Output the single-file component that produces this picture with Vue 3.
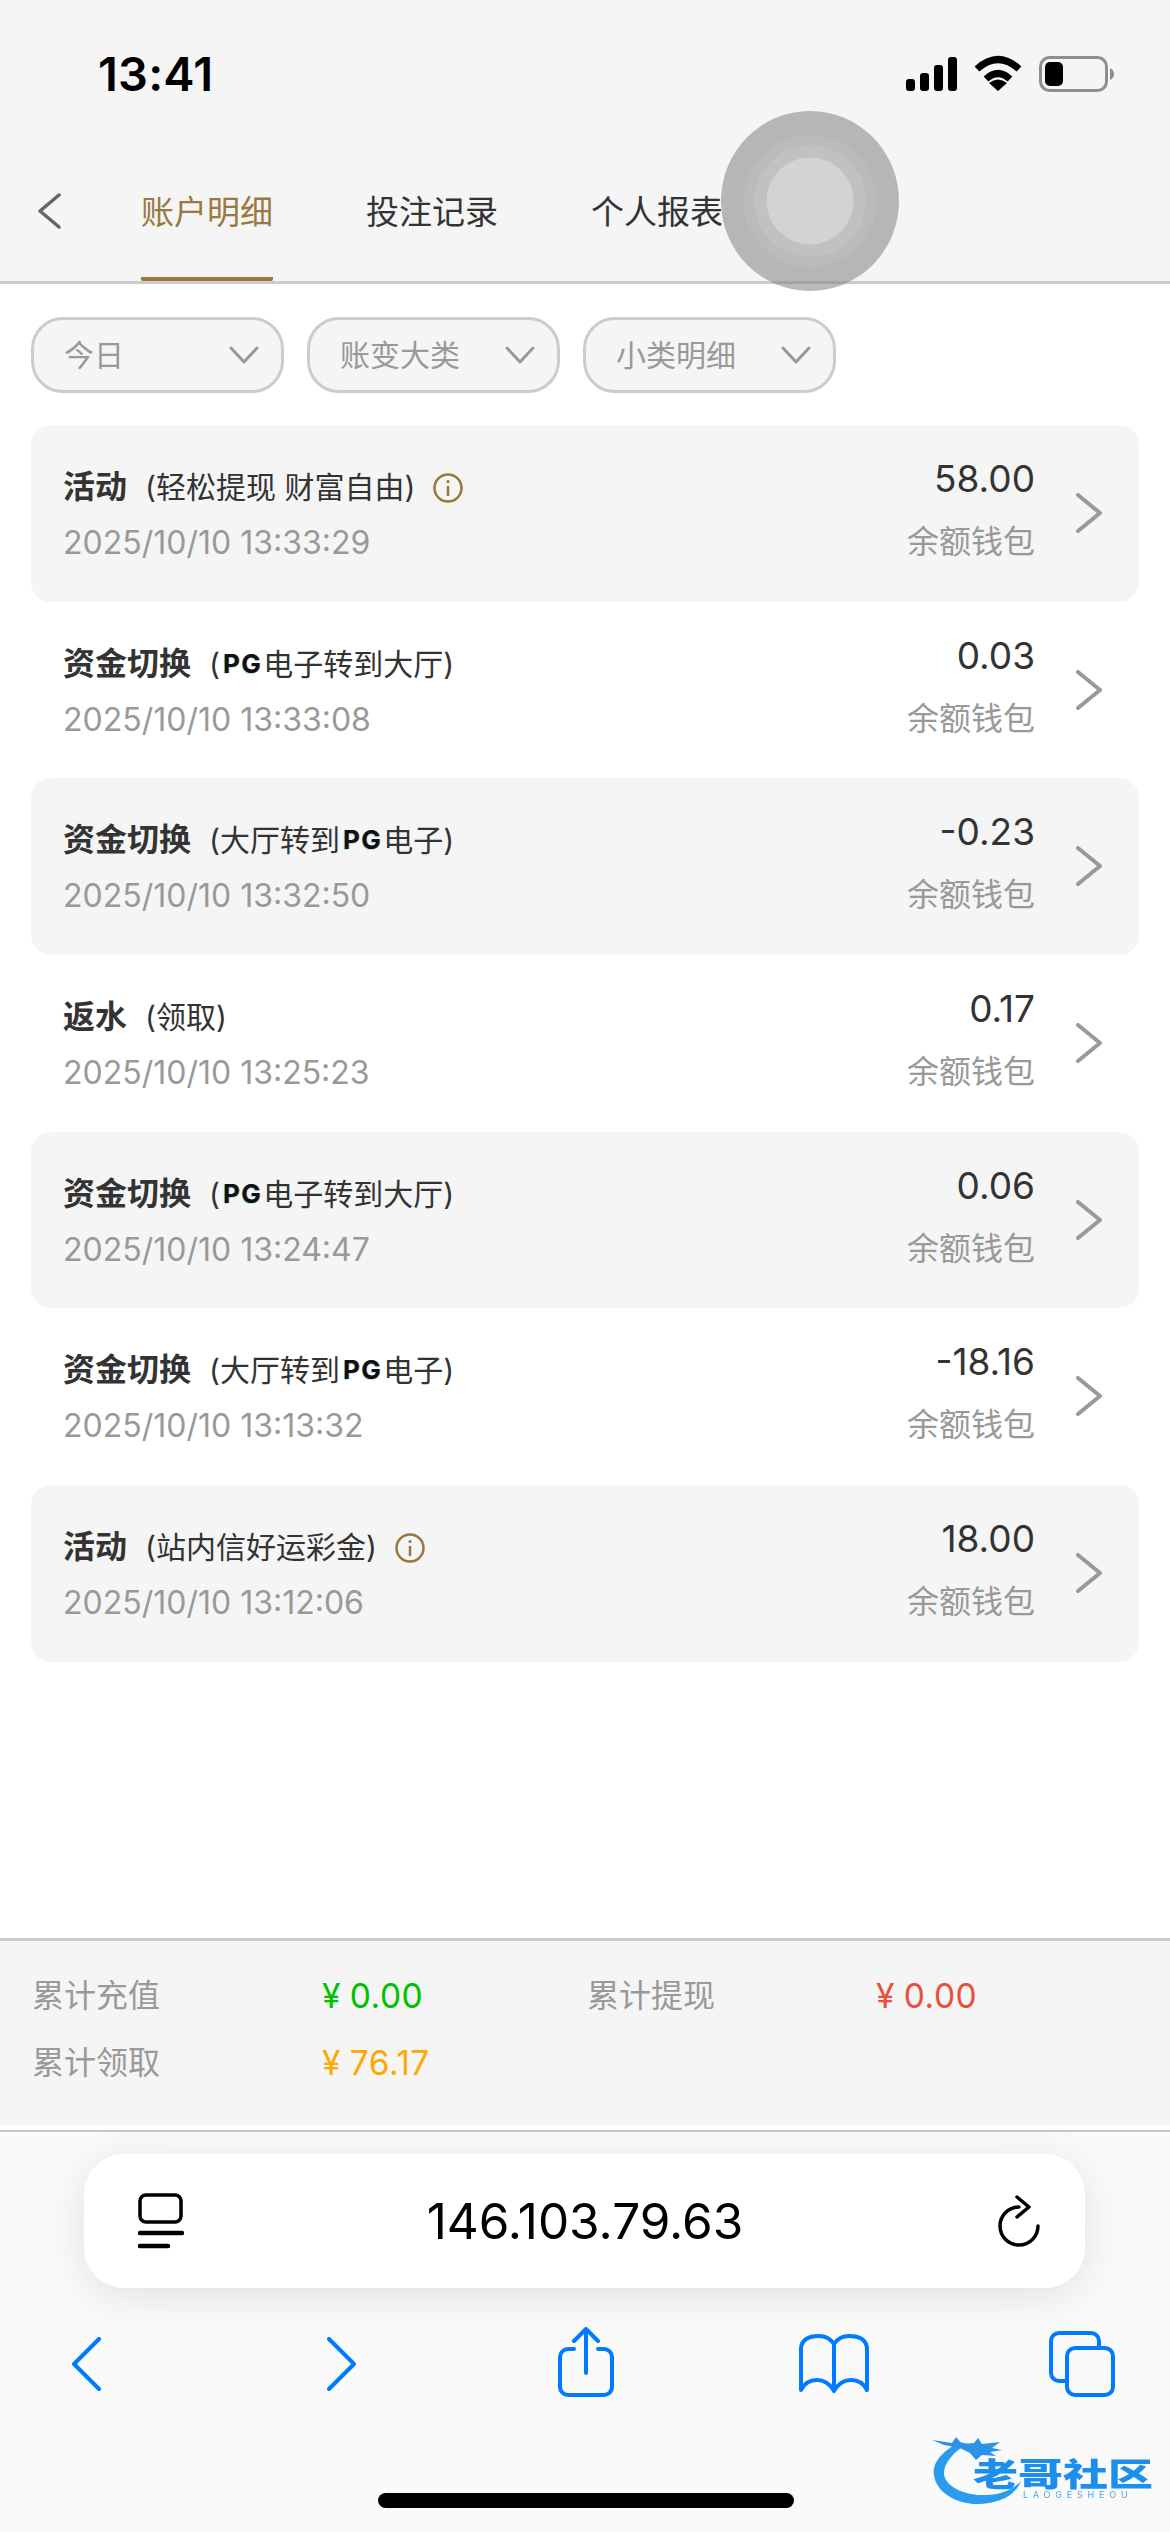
<script setup>
const rows = [
  { id: 1, title: '活动', before: '(轻松提现 财富自由)', pg: false, after: '', info: true, time: '2025/10/10 13:33:29', amount: '58.00' },
  { id: 2, title: '资金切换', before: '(', pg: true, after: '电子转到大厅)', info: false, time: '2025/10/10 13:33:08', amount: '0.03' },
  { id: 3, title: '资金切换', before: '(大厅转到', pg: true, after: '电子)', info: false, time: '2025/10/10 13:32:50', amount: '-0.23' },
  { id: 4, title: '返水', before: '(领取)', pg: false, after: '', info: false, time: '2025/10/10 13:25:23', amount: '0.17' },
  { id: 5, title: '资金切换', before: '(', pg: true, after: '电子转到大厅)', info: false, time: '2025/10/10 13:24:47', amount: '0.06' },
  { id: 6, title: '资金切换', before: '(大厅转到', pg: true, after: '电子)', info: false, time: '2025/10/10 13:13:32', amount: '-18.16' },
  { id: 7, title: '活动', before: '(站内信好运彩金)', pg: false, after: '', info: true, time: '2025/10/10 13:12:06', amount: '18.00' }
]
const filters = ['今日', '账变大类', '小类明细']
const tabs = ['账户明细', '投注记录', '个人报表']
</script>

<template>
  <div class="page">
    <header class="head">
      <div class="status">
        <span class="clock">13:41</span>
        <div class="status-icons">
          <svg class="sig" width="52" height="34" viewBox="0 0 52 34" fill="#000">
            <rect x="0" y="22" width="9" height="12" rx="3" />
            <rect x="14" y="16" width="9" height="18" rx="3" />
            <rect x="28" y="8" width="9" height="26" rx="3" />
            <rect x="42" y="0" width="9" height="34" rx="3" />
          </svg>
          <svg class="wifi" width="48" height="36" viewBox="0 0 48 36" fill="none" stroke="#000">
            <path d="M3 14Q24 -5 45 14" stroke-width="7" />
            <path d="M12 24Q24 13 36 24" stroke-width="7" />
            <path d="M24 36L15 28Q24 21 33 28Z" fill="#000" stroke="none" />
          </svg>
          <svg class="batt" width="76" height="36" viewBox="0 0 76 36">
            <rect x="1.5" y="1.5" width="66" height="33" rx="9" fill="none" stroke="#8e8e8e" stroke-width="3" />
            <rect x="6" y="6" width="18" height="24" rx="5" fill="#000" />
            <path d="M71 12q4 2 4 6t-4 6z" fill="#8e8e8e" />
          </svg>
        </div>
      </div>
      <nav class="nav">
        <svg class="back" width="24" height="36" viewBox="0 0 24 36" fill="none" stroke="#666" stroke-width="3.5" stroke-linecap="round" stroke-linejoin="round">
          <path d="M22 2L3 18L22 34" />
        </svg>
        <a v-for="(t, i) in tabs" :key="t" class="tab" :class="{ on: i === 0 }">{{ t }}</a>
      </nav>
    </header>

    <main class="main">
      <div class="filters">
        <div v-for="f in filters" :key="f" class="pill">
          <span>{{ f }}</span>
          <svg width="30" height="18" viewBox="0 0 30 18" fill="none" stroke="#999" stroke-width="3" stroke-linecap="round" stroke-linejoin="round">
            <path d="M2 2L15 16L28 2" />
          </svg>
        </div>
      </div>

      <ul class="list">
        <li v-for="(r, i) in rows" :key="r.id" class="row" :class="{ alt: i % 2 === 0 }">
          <div class="left">
            <div class="line">
              <b class="title">{{ r.title }}</b>
              <span class="sub">{{ r.before }}<span v-if="r.pg" class="pg">PG</span>{{ r.after }}</span>
              <svg v-if="r.info" class="info" width="30" height="30" viewBox="0 0 30 30" fill="none" stroke="#99783f" stroke-width="2.5">
                <circle cx="15" cy="15" r="13.5" />
                <path d="M15 13V23" />
                <circle cx="15" cy="8.5" r="1.6" fill="#99783f" stroke="none" />
              </svg>
            </div>
            <div class="time">{{ r.time }}</div>
          </div>
          <div class="right">
            <div class="amount">{{ r.amount }}</div>
            <div class="wallet">余额钱包</div>
          </div>
          <svg class="go" width="26" height="40" viewBox="0 0 26 40" fill="none" stroke="#999" stroke-width="4" stroke-linecap="round" stroke-linejoin="round">
            <path d="M2 2L24 20L2 38" />
          </svg>
        </li>
      </ul>
    </main>

    <section class="stats">
      <span class="k">累计充值</span><span class="v green">¥ 0.00</span>
      <span class="k">累计提现</span><span class="v red">¥ 0.00</span>
      <span class="k">累计领取</span><span class="v orange">¥ 76.17</span>
    </section>

    <footer class="safari">
      <div class="addr">
        <svg class="tabs-ic" width="46" height="56" viewBox="0 0 46 56" fill="none" stroke="#000" stroke-width="3.5" stroke-linecap="round">
          <rect x="2" y="2" width="41" height="27" rx="6" />
          <path d="M2 40H44" stroke-width="4.5" />
          <path d="M2 53H30" stroke-width="4.5" />
        </svg>
        <span class="url">146.103.79.63</span>
        <svg class="reload" width="44" height="52" viewBox="0 0 44 52" fill="none" stroke="#000" stroke-width="3.5" stroke-linecap="round" stroke-linejoin="round">
          <path d="M21 12A19 19 0 1 0 40 31" />
          <path d="M19 2L31 12L19 22" />
        </svg>
      </div>
      <div class="tools">
        <svg class="t1" width="29" height="54" viewBox="0 0 29 54" fill="none" stroke="#007aff" stroke-width="4" stroke-linecap="round" stroke-linejoin="round">
          <path d="M27 2L2 27L27 52" />
        </svg>
        <svg class="t2" width="29" height="54" viewBox="0 0 29 54" fill="none" stroke="#007aff" stroke-width="4" stroke-linecap="round" stroke-linejoin="round">
          <path d="M2 2L27 27L2 52" />
        </svg>
        <svg class="t3" width="56" height="70" viewBox="0 0 56 70" fill="none" stroke="#007aff" stroke-width="4" stroke-linecap="round" stroke-linejoin="round">
          <path d="M16 22H10a8 8 0 0 0-8 8V60a8 8 0 0 0 8 8H46a8 8 0 0 0 8-8V30a8 8 0 0 0-8-8H40" />
          <path d="M28 46V3" />
          <path d="M16 14L28 2L40 14" />
        </svg>
        <svg class="t4" width="70" height="59" viewBox="0 0 70 59" fill="none" stroke="#007aff" stroke-width="4" stroke-linejoin="round">
          <path d="M35 10C31 4 25 2 20 2C10 2 3 5 2 14V56C6 48 12 46 18 46C26 46 31 50 35 57C39 50 44 46 52 46C58 46 64 48 68 56V14C67 5 60 2 50 2C45 2 39 4 35 10Z" />
          <path d="M35 10V57" />
        </svg>
        <svg class="t5" width="66" height="66" viewBox="0 0 66 66" fill="none" stroke="#007aff" stroke-width="4" stroke-linejoin="round">
          <path d="M17 50H10a8 8 0 0 1-8-8V10a8 8 0 0 1 8-8H42a8 8 0 0 1 8 8V15" />
          <rect x="18" y="17" width="46" height="47" rx="8" />
        </svg>
      </div>
      <div class="home"></div>
    </footer>

    <div class="assist">
      <i class="ring r1"></i>
      <i class="ring r2"></i>
      <i class="ring r3"></i>
    </div>

    <div class="logo">
      <svg class="dragon" width="100" height="75" viewBox="0 0 100 75">
        <path d="M30 11C12 20 2 32 4 44C6 62 28 74 50 73C70 72 86 64 91 50C84 58 70 65 52 64C32 64 14 54 14 42C14 32 24 20 38 13Z" fill="#2a9cf0" />
        <path d="M2 9L22 12L26 6L32 13L44 12L48 7L52 13L70 11L62 17L72 19L60 21L66 25L52 24L46 29L40 22L30 17L14 14Z" fill="#2a92ea" />
      </svg>
      <span class="logo-cn">老哥社区</span>
      <span class="logo-en">LAOGESHEOU</span>
    </div>
  </div>
</template>

<style>
html, body { margin: 0; padding: 0; background: #fff; }
</style>

<style scoped>
* { box-sizing: border-box; }
.page {
  position: relative;
  width: 1170px;
  height: 2532px;
  overflow: hidden;
  display: flex;
  flex-direction: column;
  background: #fff;
  font-family: Inter, "Noto Sans CJK SC", sans-serif;
  color: #333;
}
.head {
  height: 284px;
  background: #f5f5f5;
  border-bottom: 3px solid #ccc;
  flex: none;
}
.status {
  height: 150px;
  display: flex;
  align-items: flex-start;
  justify-content: space-between;
  padding: 0 55px 0 98px;
}
.clock {
  margin-top: 48px;
  font-size: 47px;
  line-height: 52px;
  font-weight: 600;
  color: #000;
  letter-spacing: .2px;
}
.status-icons { display: flex; align-items: flex-start; margin-top: 55px; }
.sig { margin-top: 2px; }
.wifi { margin-left: 16px; }
.batt { margin-left: 17px; margin-top: 1px; }
.nav {
  height: 131px;
  display: flex;
  align-items: flex-start;
  padding-left: 37px;
  position: relative;
}
.back { margin-top: 43px; margin-right: 80px; }
.tab {
  width: 132px;
  height: 131px;
  margin-right: 93px;
  font-size: 33px;
  line-height: 46px;
  padding-top: 39px;
  white-space: nowrap;
  color: #333;
}
.tab.on {
  color: #9a7840;
  border-bottom: 4px solid #9a7840;
  border-radius: 0 0 2px 2px;
}
.main { flex: 1; padding: 33px 31px 0; min-height: 0; }
.filters { display: flex; gap: 23px; }
.pill {
  width: 253px;
  height: 76px;
  border: 3px solid #ccc;
  border-radius: 32px;
  background: #f5f5f5;
  display: flex;
  align-items: center;
  justify-content: space-between;
  padding: 0 22px 0 30px;
  font-size: 30px;
  color: #999;
}
.pill span { white-space: nowrap; margin-top: -5px; }
.list { list-style: none; margin: 32px 0 0; padding: 0; }
.row {
  height: 176.67px;
  width: 1108px;
  display: flex;
  align-items: flex-start;
  padding: 0 37px 0 32px;
  border-radius: 20px;
}
.row.alt { background: #f5f5f5; }
.left { flex: 1; padding-top: 39px; min-width: 0; }
.line { height: 46px; display: flex; align-items: center; white-space: nowrap; }
.title { font-size: 32px; font-weight: 700; color: #333; line-height: 46px; }
.sub { font-size: 30px; margin-left: 18px; color: #333; line-height: 46px; display: inline-flex; align-items: center; white-space: pre; }
.pg {
  font-size: 26px;
  font-weight: 700;
  color: #111;
  letter-spacing: 1.5px;
  margin: 0 1px 0 3px;
  text-shadow: -1px 1px 0 rgba(0, 190, 255, .35), 1px 0 0 rgba(255, 90, 30, .35);
}
.info { margin-left: 18px; margin-top: 2px; }
.time { margin-top: 11px; font-size: 32px; line-height: 44px; color: #999; }
.right { text-align: right; padding-top: 32px; margin-right: 41px; }
.amount { font-size: 37px; line-height: 44px; color: #333; }
.wallet { margin-top: 19px; font-size: 32px; line-height: 44px; color: #999; }
.go { margin-top: 68px; flex: none; }
.stats {
  flex: none;
  height: 187px;
  background: #f5f5f5;
  border-top: 3px solid #ccc;
  padding: 33px 0 0 32px;
  display: grid;
  grid-template-columns: 290px 265px 289px 1fr;
  grid-auto-rows: 44px;
  row-gap: 23px;
  font-size: 32px;
  line-height: 44px;
}
.k { color: #999; white-space: nowrap; }
.v { font-size: 33.5px; white-space: nowrap; word-spacing: -1px; letter-spacing: .5px; }
.green { color: #00c000; }
.red { color: #e8503c; }
.orange { color: #ffa800; }
.safari {
  flex: none;
  height: 402px;
  margin-top: 5px;
  background: #fafafa;
  border-top: 2px solid #c8c8c8;
  padding-top: 22px;
}
.addr {
  width: 1001px;
  height: 134px;
  margin-left: 84px;
  background: #fff;
  border-radius: 40px;
  box-shadow: 0 8px 44px rgba(0, 0, 0, .1);
  display: grid;
  grid-template-columns: 1fr auto 1fr;
  align-items: center;
  padding: 0 43px 0 54px;
}
.tabs-ic { justify-self: start; }
.reload { justify-self: end; }
.url { font-size: 49.5px; color: #000; margin-right: 10px; }
.tools { display: flex; align-items: center; height: 70px; margin-top: 39px; }
.t1 { margin-left: 72px; margin-top: 4px; }
.t2 { margin-left: 226px; margin-top: 4px; }
.t3 { margin-left: 202px; }
.t4 { margin-left: 185px; margin-top: 2px; }
.t5 { margin-left: 180px; margin-top: 4px; }
.home {
  width: 416px;
  height: 15px;
  margin: 96px 0 0 378px;
  border-radius: 8px;
  background: #000;
}
.assist {
  position: absolute;
  left: 721px;
  top: 111px;
  width: 178px;
  height: 180px;
  border-radius: 50%;
  background: rgba(130, 130, 130, .55);
}
.ring { position: absolute; border-radius: 50%; left: 50%; top: 50%; transform: translate(-50%, -50%); }
.r1 { width: 133px; height: 132px; background: rgba(190, 190, 190, .6); }
.r2 { width: 112px; height: 112px; background: rgba(195, 195, 195, .7); }
.r3 { width: 87px; height: 87px; background: #d3d3d3; }
.logo {
  position: absolute;
  left: 930px;
  top: 2431px;
  width: 225px;
  height: 75px;
  filter: blur(.7px);
}
.dragon { position: absolute; left: 0; top: 0; }
.logo-cn {
  position: absolute;
  left: 43px;
  top: 15px;
  width: 184px;
  font-size: 45px;
  line-height: 56px;
  font-weight: 900;
  color: #1c8eee;
  white-space: nowrap;
  transform: scaleY(.72);
}
.logo-en {
  position: absolute;
  left: 93px;
  top: 59px;
  font-size: 9px;
  line-height: 10px;
  letter-spacing: 4.8px;
  color: #4aa6ee;
  white-space: nowrap;
}
</style>
